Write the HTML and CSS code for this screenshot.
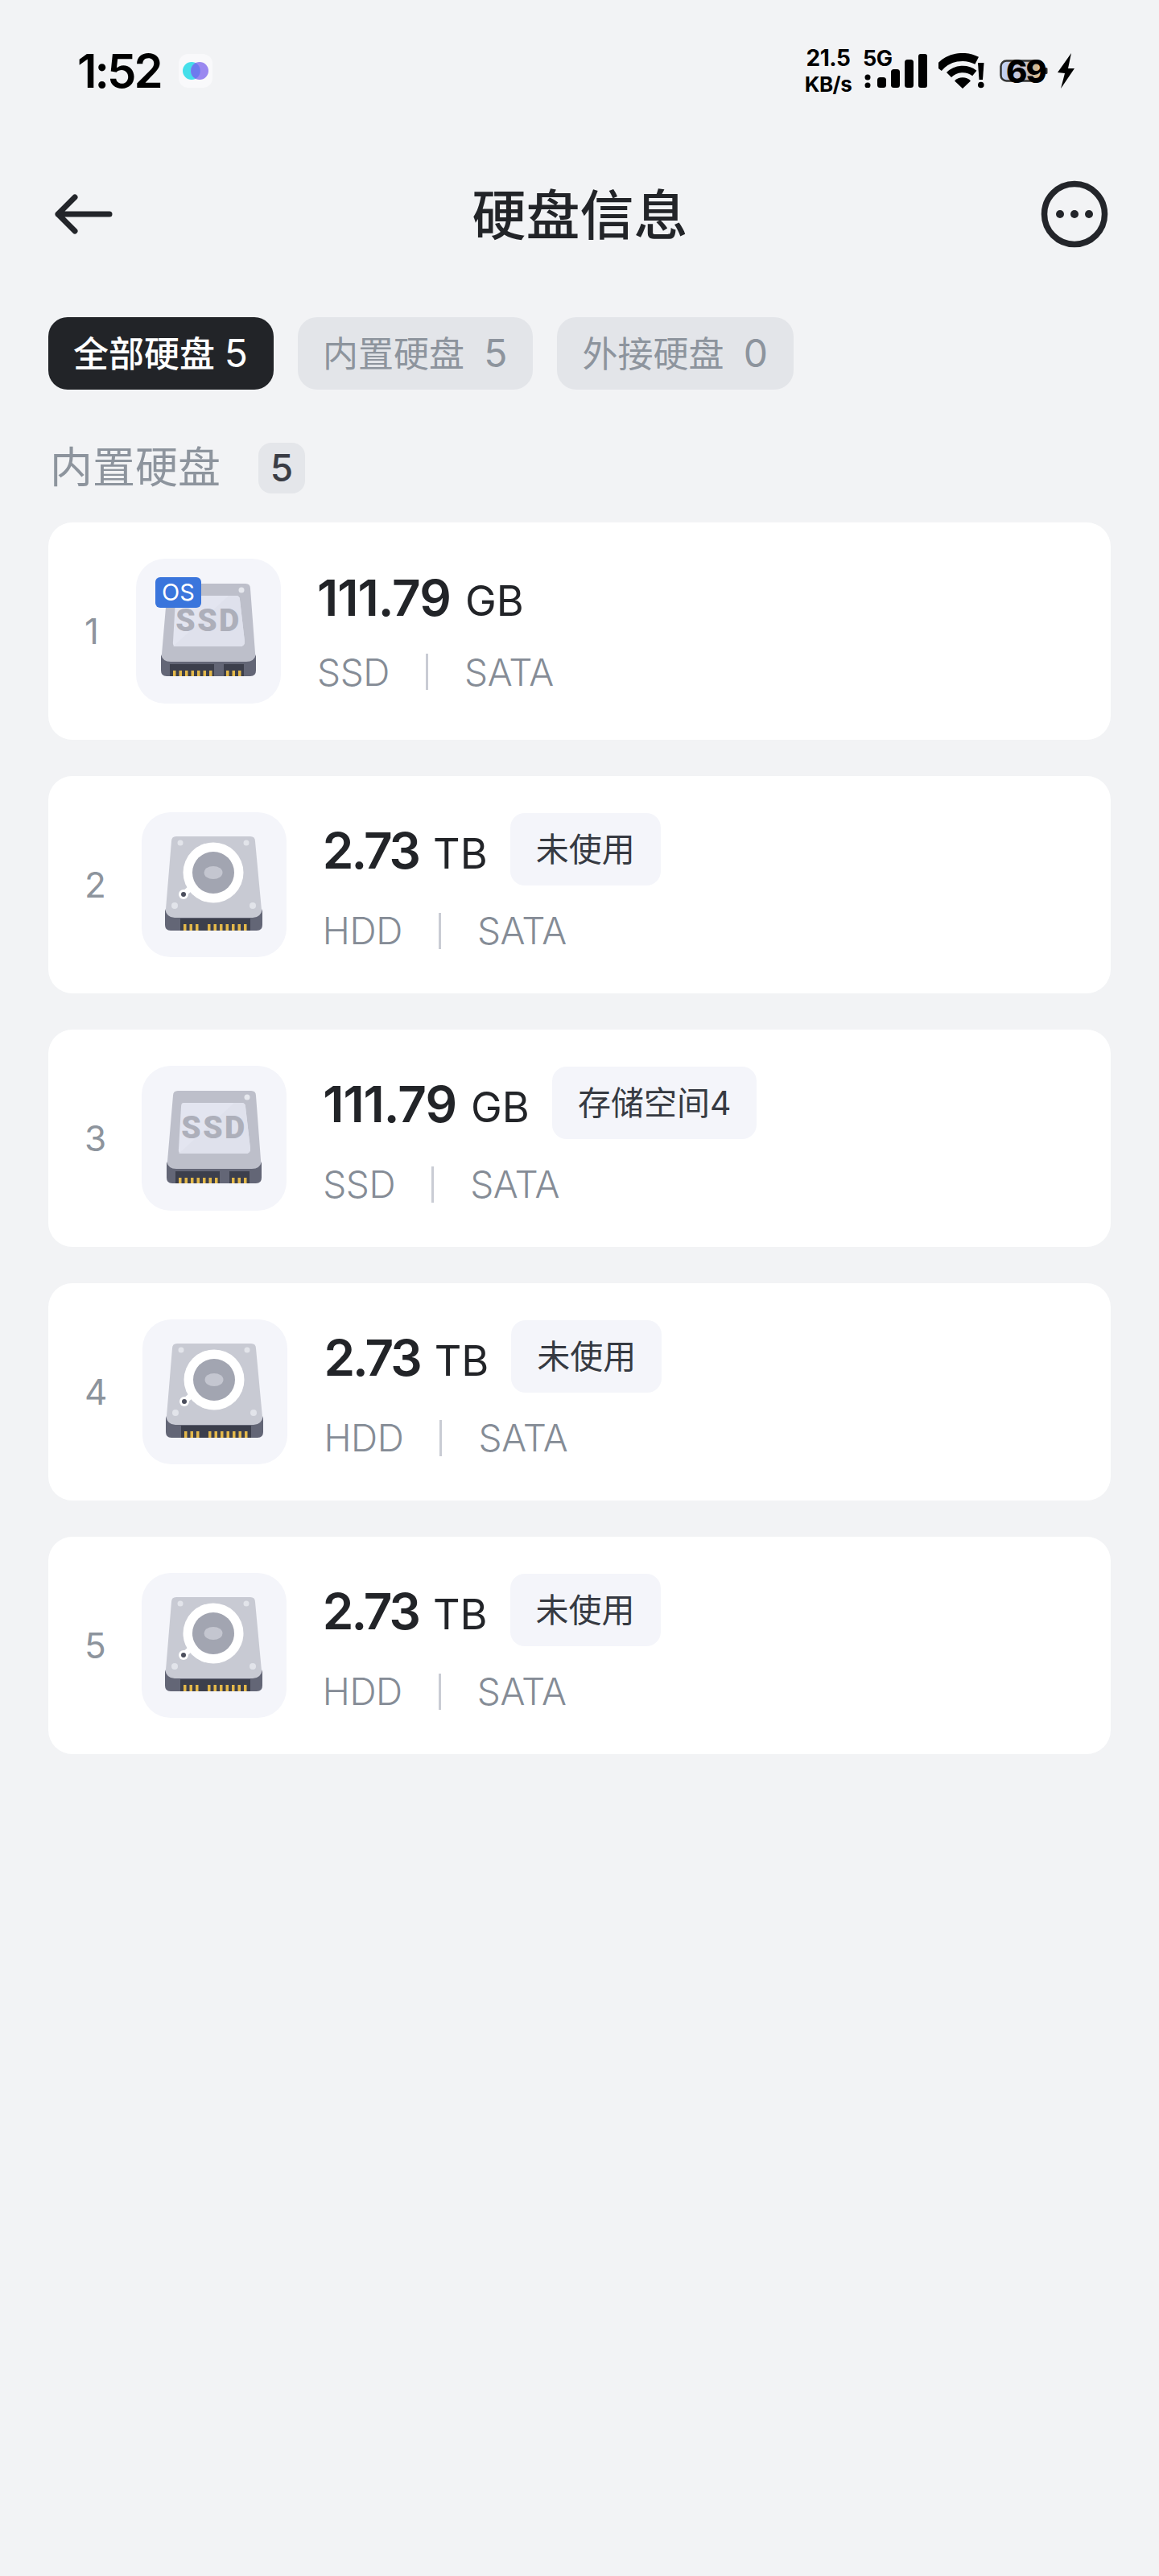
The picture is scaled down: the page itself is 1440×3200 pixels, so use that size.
FILE: index.html
```html
<!DOCTYPE html>
<html lang="zh-CN">
<head>
  <meta charset="UTF-8">
  <title>硬盘信息</title>
  <link rel="stylesheet" href="styles.css">
</head>
<body>

  <svg class="defs" width="0" height="0">
    <symbol id="hdd" viewBox="0 0 180 180">
      <path d="M37 36 Q37 30 43 30 H135 Q141 30 141 36 L150 132 H29 Z" fill="#c8cad3"/>
      <path d="M29 120 Q31 131 41 131 H138 Q148 131 150 120 V140 Q150 147 143 147 H36 Q29 147 29 140 Z" fill="#636676"/>
      <rect x="48" y="132" width="87" height="15" fill="#3c3f4c"/>
      <circle cx="48" cy="38" r="3.5" fill="#e2e4ea"/>
      <circle cx="130" cy="38" r="3.5" fill="#e2e4ea"/>
      <circle cx="41" cy="116" r="4" fill="#e2e4ea"/>
      <circle cx="138" cy="116" r="4" fill="#e2e4ea"/>
      <path d="M52 102 L68 88" stroke="#fff" stroke-width="7"/>
      <circle cx="89" cy="75" r="37.5" fill="#fff"/>
      <circle cx="89" cy="75" r="26" fill="#a2a5b1"/>
      <ellipse cx="89" cy="75" rx="11.5" ry="8" fill="#c4c6d0"/>
      <circle cx="52" cy="102" r="6" fill="#fff"/>
      <circle cx="52" cy="102" r="3" fill="#4b4e5c"/>
      <g fill="#e3b84a">
        <rect x="52" y="139" width="3.5" height="8"/>
        <rect x="59.5" y="139" width="3.5" height="8"/>
        <rect x="67" y="139" width="3.5" height="8"/>
        <rect x="82" y="139" width="3.5" height="8"/>
        <rect x="89.5" y="139" width="3.5" height="8"/>
        <rect x="97" y="139" width="3.5" height="8"/>
        <rect x="104.5" y="139" width="3.5" height="8"/>
        <rect x="112" y="139" width="3.5" height="8"/>
        <rect x="119.5" y="139" width="3.5" height="8"/>
        <rect x="127" y="139" width="3.5" height="8"/>
      </g>
    </symbol>
    <symbol id="ssd" viewBox="0 0 180 180">
      <path d="M39 37 Q39 31 45 31 H136 Q142 31 142 37 L149 130 H31 Z" fill="#bdbfca"/>
      <path d="M31 119 Q33 128 43 128 H137 Q147 128 149 119 V139 Q149 146 142 146 H38 Q31 146 31 139 Z" fill="#636676"/>
      <path d="M52 46 H124 Q129 46 129 51 L135 103 Q135 109 129 109 H50 Q45 109 46 103 L49 51 Q49 46 52 46 Z" fill="#e3e5f0"/>
      <path d="M46 109 L115 46 H124 Q129 46 129 51 L135 103 Q135 109 129 109 Z" fill="#dfe1ec"/>
      <circle cx="131" cy="39" r="3.5" fill="#e6e8ee"/>
      <rect x="42" y="131" width="55" height="15" fill="#3c3f4c"/>
      <rect x="109" y="131" width="25" height="15" fill="#3c3f4c"/>
      <g fill="#e3b84a">
        <rect x="46" y="139" width="3.5" height="7"/>
        <rect x="53.5" y="139" width="3.5" height="7"/>
        <rect x="61" y="139" width="3.5" height="7"/>
        <rect x="68.5" y="139" width="3.5" height="7"/>
        <rect x="76" y="139" width="3.5" height="7"/>
        <rect x="83.5" y="139" width="3.5" height="7"/>
        <rect x="91" y="139" width="3.5" height="7"/>
        <rect x="112" y="139" width="3.5" height="7"/>
        <rect x="119.5" y="139" width="3.5" height="7"/>
        <rect x="127" y="139" width="3.5" height="7"/>
      </g>
    </symbol>
  </svg>

  <div class="status">
    <div class="status-left">
      <span class="time">1:52</span>
      <div class="app-icon">
        <svg width="32" height="22" viewBox="0 0 32 22">
          <circle cx="11" cy="11" r="11" fill="#45dfea"/>
          <circle cx="21" cy="11" r="11" fill="#9a88f0"/>
          <path d="M16 1.3 A11 11 0 0 1 16 20.7 A11 11 0 0 1 16 1.3 Z" fill="#6d7bee"/>
        </svg>
      </div>
    </div>
    <div class="status-right">
      <div class="speed">21.5<br><span>KB/s</span></div>
      <div class="signal">
        <span class="net">5G</span>
        <svg width="80" height="42" viewBox="0 0 80 42" fill="#000">
          <circle cx="6" cy="29" r="3.5"/>
          <circle cx="6" cy="39" r="3.5"/>
          <rect x="18" y="29" width="11" height="13" rx="3.5"/>
          <rect x="35" y="19" width="11" height="23" rx="3.5"/>
          <rect x="52" y="7" width="11" height="35" rx="3.5"/>
          <rect x="69" y="0" width="11" height="42" rx="3"/>
        </svg>
      </div>
      <svg class="wifi" width="58" height="44" viewBox="0 0 58 44">
        <path d="M0 18.9 A39 39 0 0 1 47.7 9.25" fill="none" stroke="#000" stroke-width="10"/>
        <path d="M13 27 A24 24 0 0 1 44.8 25" fill="none" stroke="#000" stroke-width="8.5"/>
        <path d="M30 44 L20 34.5 A14 14 0 0 1 40 34.5 Z" fill="#000"/>
        <path d="M49 12 H56.5 L55 33 H50.5 Z" fill="#000"/>
        <circle cx="52.8" cy="39.5" r="3.8" fill="#000"/>
      </svg>
      <div class="battery">
        <svg width="60" height="28" viewBox="0 0 60 28">
          <defs>
            <linearGradient id="charge" x1="0" x2="1" y1="0" y2="0">
              <stop offset="0" stop-color="#c2d2f6"/>
              <stop offset="0.5" stop-color="#c6c4d4"/>
              <stop offset="0.85" stop-color="#d2b88e"/>
              <stop offset="1" stop-color="#f2f3f5"/>
            </linearGradient>
          </defs>
          <rect x="1.5" y="1.5" width="53" height="25" rx="7" fill="url(#charge)" stroke="#333" stroke-width="2.5"/>
          <rect x="56" y="10" width="3.5" height="8" rx="1.5" fill="#333"/>
        </svg>
        <span class="battery-num">69</span>
      </div>
      <svg width="21" height="44" viewBox="0 0 21 44">
        <path d="M17 0 L0 24 L9 25 L4 44 L21 19 L13 19 Z" fill="#000"/>
      </svg>
    </div>
  </div>

  <div class="nav">
    <svg width="84" height="60" viewBox="0 0 84 60">
      <path d="M8 30 H72 M29 9 L8 30 L29 51" fill="none" stroke="#23252a" stroke-width="7" stroke-linecap="round" stroke-linejoin="round"/>
    </svg>
    <h1>硬盘信息</h1>
    <svg width="84" height="84" viewBox="0 0 84 84">
      <circle cx="42" cy="42" r="37.5" fill="none" stroke="#23252a" stroke-width="7.5"/>
      <circle cx="24" cy="42" r="5" fill="#23252a"/>
      <circle cx="42" cy="42" r="5" fill="#23252a"/>
      <circle cx="60" cy="42" r="5" fill="#23252a"/>
    </svg>
  </div>

  <div class="tabs">
    <div class="tab active">全部硬盘 <span class="tab-num">5</span></div>
    <div class="tab">内置硬盘 <span class="tab-num wide">5</span></div>
    <div class="tab">外接硬盘 <span class="tab-num wide">0</span></div>
  </div>

  <div class="section-title">
    <span>内置硬盘</span>
    <span class="section-count">5</span>
  </div>

  <div class="disk-list">
    <div class="disk">
      <span class="disk-no">1</span>
      <div class="thumb">
        <svg width="180" height="180"><use href="#ssd"/><text x="90" y="90" class="ssd-text" text-anchor="middle">SSD</text></svg>
        <span class="os-badge">OS</span>
      </div>
      <div class="disk-info">
        <div class="disk-size">
          <span class="size-num gb">111.79</span><span class="size-unit">GB</span>
        </div>
        <div class="disk-meta"><span>SSD</span><i></i><span>SATA</span></div>
      </div>
    </div>

    <div class="disk">
      <span class="disk-no">2</span>
      <div class="thumb"><svg width="180" height="180"><use href="#hdd"/></svg></div>
      <div class="disk-info has-chip">
        <div class="disk-size">
          <span class="size-num">2.73</span><span class="size-unit">TB</span>
          <span class="chip">未使用</span>
        </div>
        <div class="disk-meta"><span>HDD</span><i></i><span>SATA</span></div>
      </div>
    </div>

    <div class="disk">
      <span class="disk-no">3</span>
      <div class="thumb">
        <svg width="180" height="180"><use href="#ssd"/><text x="90" y="90" class="ssd-text" text-anchor="middle">SSD</text></svg>
      </div>
      <div class="disk-info has-chip">
        <div class="disk-size">
          <span class="size-num gb">111.79</span><span class="size-unit">GB</span>
          <span class="chip">存储空间4</span>
        </div>
        <div class="disk-meta"><span>SSD</span><i></i><span>SATA</span></div>
      </div>
    </div>

    <div class="disk">
      <span class="disk-no">4</span>
      <div class="thumb"><svg width="180" height="180"><use href="#hdd"/></svg></div>
      <div class="disk-info has-chip">
        <div class="disk-size">
          <span class="size-num">2.73</span><span class="size-unit">TB</span>
          <span class="chip">未使用</span>
        </div>
        <div class="disk-meta"><span>HDD</span><i></i><span>SATA</span></div>
      </div>
    </div>

    <div class="disk">
      <span class="disk-no">5</span>
      <div class="thumb"><svg width="180" height="180"><use href="#hdd"/></svg></div>
      <div class="disk-info has-chip">
        <div class="disk-size">
          <span class="size-num">2.73</span><span class="size-unit">TB</span>
          <span class="chip">未使用</span>
        </div>
        <div class="disk-meta"><span>HDD</span><i></i><span>SATA</span></div>
      </div>
    </div>
  </div>

</body>
</html>
```
FILE: styles.css
```css
* {
  box-sizing: border-box;
}

body {
  margin: 0;
  height: 3200px;
  background: #f2f3f5;
  font-family: Inter, "Noto Sans CJK SC", sans-serif;
  color: #222428;
}

.defs {
  position: absolute;
}

.ssd-text {
  font-family: Roboto, sans-serif;
  font-weight: 900;
  font-size: 39px;
  letter-spacing: 2.5px;
  fill: #adafba;
}

/* status bar */
.status {
  height: 176px;
  padding: 0 105px 0 96px;
  display: flex;
  justify-content: space-between;
  align-items: center;
  color: #000;
}

.status-left {
  display: flex;
  align-items: center;
  gap: 22px;
}

.time {
  font-size: 58px;
  font-weight: 600;
  letter-spacing: -3px;
  line-height: 60px;
}

.app-icon {
  width: 42px;
  height: 42px;
  border-radius: 12px;
  background: #f9f9fb;
  display: flex;
  align-items: center;
  justify-content: center;
}

.status-right {
  display: flex;
  align-items: center;
}

.speed {
  width: 62px;
  margin-right: 12px;
  font-size: 28px;
  font-weight: 700;
  line-height: 32px;
  text-align: center;
  letter-spacing: -0.5px;
}

.speed span {
  font-size: 26px;
}

.signal {
  position: relative;
  width: 80px;
  height: 42px;
  margin-right: 14px;
}

.net {
  position: absolute;
  left: 0;
  top: -9px;
  font-size: 27px;
  font-weight: 700;
  line-height: 30px;
  letter-spacing: -0.5px;
}

.wifi {
  margin-right: 18px;
}

.battery {
  position: relative;
  width: 60px;
  height: 28px;
  margin-right: 12px;
  line-height: 0;
}

.battery-num {
  position: absolute;
  left: 8px;
  top: 15px;
  font-size: 40px;
  font-weight: 800;
  line-height: 0;
  letter-spacing: -2px;
}

/* title row */
.nav {
  height: 100px;
  margin-top: 40px;
  padding: 0 63px 0 64px;
  display: flex;
  align-items: center;
  justify-content: space-between;
}

.nav h1 {
  margin: 0;
  padding-top: 4px;
  font-size: 67px;
  font-weight: 500;
  line-height: 100px;
}

/* tabs */
.tabs {
  margin-top: 78px;
  padding: 0 60px;
  display: flex;
  gap: 30px;
}

.tab {
  height: 90px;
  padding: 0 32px 0 31px;
  border-radius: 24px;
  background: #e3e5e9;
  color: #8d949d;
  font-size: 44px;
  line-height: 90px;
  white-space: nowrap;
}

.tab.active {
  background: #222428;
  color: #fff;
  font-weight: 500;
}

.tab-num {
  font-size: 48px;
  font-weight: 400;
}

.tab-num.wide {
  margin-left: 12px;
}

.section-title {
  margin-top: 66px;
  padding-left: 62px;
  display: flex;
  align-items: center;
  gap: 47px;
  color: #8d949d;
  font-size: 53px;
  line-height: 63px;
}

.section-count {
  width: 58px;
  height: 63px;
  border-radius: 16px;
  background: #e4e6ea;
  color: #3a3d45;
  font-size: 46px;
  font-weight: 500;
  line-height: 63px;
  text-align: center;
}

/* disk cards */
.disk-list {
  margin-top: 36px;
  padding: 0 60px;
  display: flex;
  flex-direction: column;
  gap: 45px;
}

.disk {
  height: 270px;
  padding: 0 45px;
  border-radius: 30px;
  background: #fff;
  display: flex;
  align-items: center;
}

.disk-no {
  min-width: 20px;
  margin-right: 44px;
  color: #8d949d;
  font-size: 44px;
  font-weight: 400;
}

.thumb {
  position: relative;
  width: 180px;
  height: 180px;
  border-radius: 36px;
  background: #f4f5fa;
}

.thumb svg {
  display: block;
}

.os-badge {
  position: absolute;
  left: 24px;
  top: 23px;
  width: 57px;
  height: 38px;
  border-radius: 6px;
  background: #3a75dc;
  color: #fff;
  font-size: 29px;
  line-height: 38px;
  text-align: center;
}

.disk-info {
  margin-left: 45px;
  display: flex;
  flex-direction: column;
  gap: 29px;
}

.disk-info.has-chip {
  margin-top: -5px;
}

.disk-size {
  min-height: 72px;
  display: flex;
  align-items: center;
}

.size-num {
  font-size: 62px;
  font-weight: 600;
  letter-spacing: -3px;
  line-height: 72px;
}

.size-num.gb {
  letter-spacing: -1px;
}

.size-unit {
  margin-left: 18px;
  margin-top: 8px;
  font-size: 52px;
  line-height: 64px;
}

.has-chip .size-num {
  margin-top: 4px;
}

.has-chip .size-unit {
  margin-top: 12px;
}

.chip {
  height: 90px;
  margin-left: 28px;
  padding: 0 32px;
  border-radius: 18px;
  background: #f4f5fa;
  color: #363a42;
  font-size: 41px;
  line-height: 90px;
}

.disk-meta {
  height: 54px;
  display: flex;
  align-items: center;
  gap: 45px;
  color: #858c96;
  font-size: 46px;
  font-weight: 300;
  letter-spacing: -0.4px;
  line-height: 54px;
}

.disk-meta i {
  width: 3px;
  height: 45px;
  background: #c9ccd4;
}
```
